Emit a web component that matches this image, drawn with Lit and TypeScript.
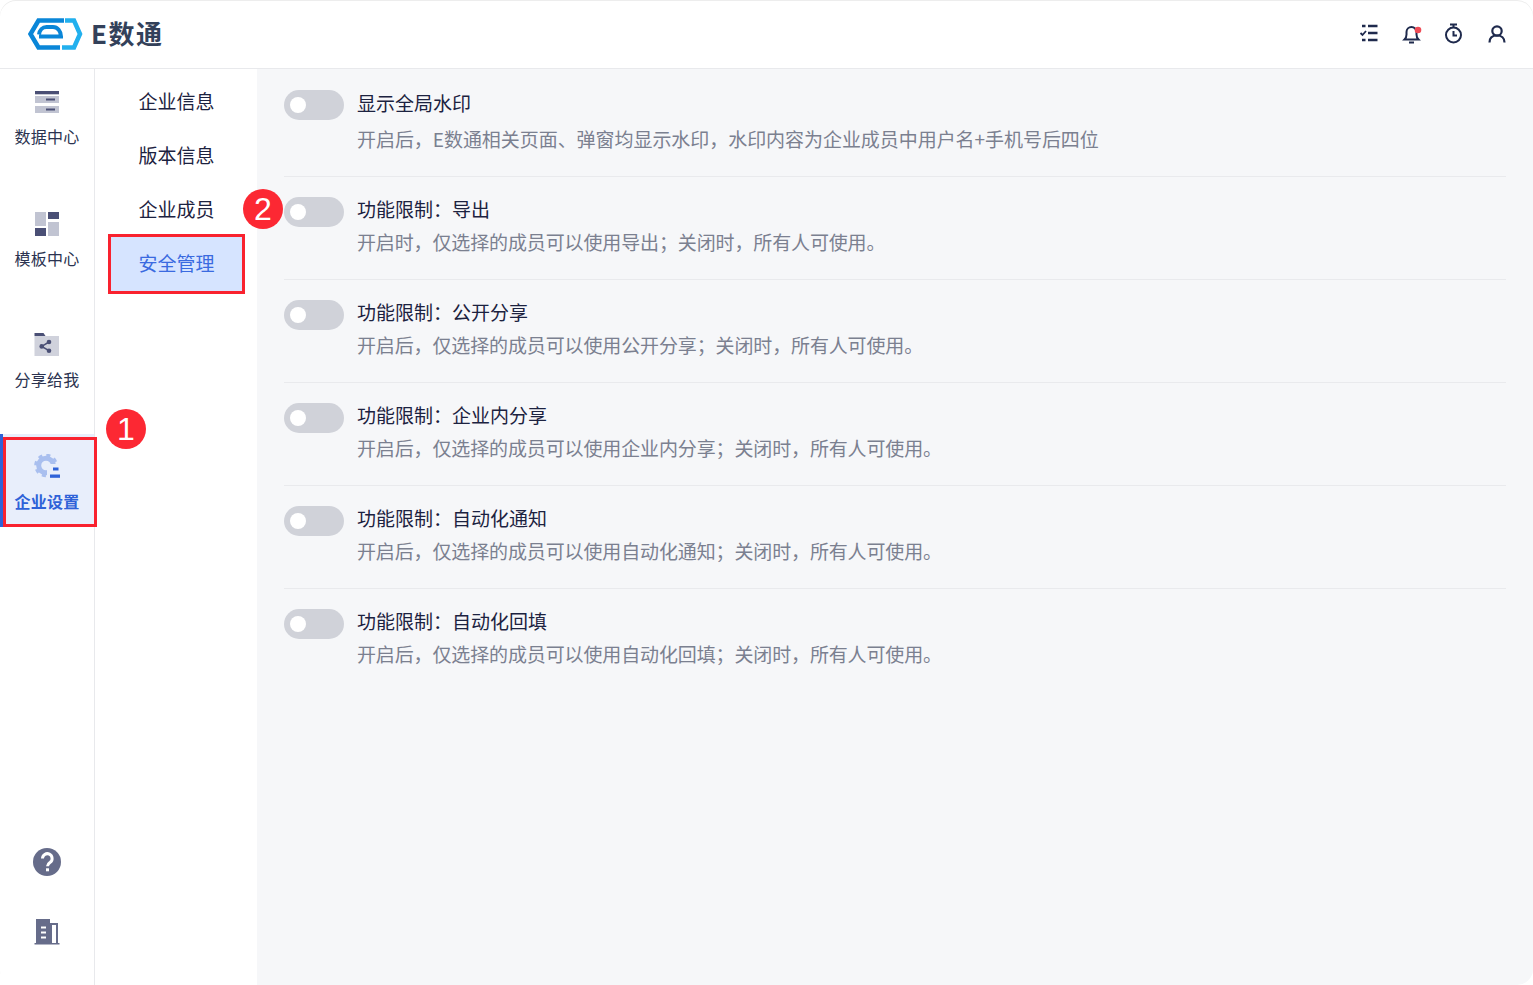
import { LitElement, html, css, svg } from "lit";
import { customElement } from "lit/decorators.js";

const rows = [
  ["显示全局水印", "开启后，E数通相关页面、弹窗均显示水印，水印内容为企业成员中用户名+手机号后四位"],
  ["功能限制：导出", "开启时，仅选择的成员可以使用导出；关闭时，所有人可使用。"],
  ["功能限制：公开分享", "开启后，仅选择的成员可以使用公开分享；关闭时，所有人可使用。"],
  ["功能限制：企业内分享", "开启后，仅选择的成员可以使用企业内分享；关闭时，所有人可使用。"],
  ["功能限制：自动化通知", "开启后，仅选择的成员可以使用自动化通知；关闭时，所有人可使用。"],
  ["功能限制：自动化回填", "开启后，仅选择的成员可以使用自动化回填；关闭时，所有人可使用。"],
];

const icons = {
  data: svg`<rect x="2" y="2" width="24" height="3.300" fill="#4a4f75"/><rect x="2" y="7" width="24" height="7" fill="#c1c4d2"/><rect x="13" y="9.500" width="9" height="2" fill="#4a4f75"/><rect x="2" y="17" width="24" height="7" fill="#c1c4d2"/><rect x="13" y="19.500" width="9" height="2" fill="#4a4f75"/>`,
  tpl: svg`<rect x="2" y="1" width="11" height="14" fill="#c1c4d2"/><rect x="15" y="1" width="11" height="7" fill="#4a4f75"/><rect x="2" y="17" width="11" height="8" fill="#4a4f75"/><rect x="15" y="11" width="11" height="14" fill="#c1c4d2"/>`,
  share: svg`<path d="M1.500 4V1h9l2 3z" fill="#4a4f75"/><rect x="1.500" y="4" width="24.500" height="20" fill="#d0d2dc"/><path d="M16 10l-7.300 4.400L16 18.700" fill="none" stroke="#4a4f75" stroke-width="1.500"/><circle cx="16" cy="10" r="2.300" fill="#4a4f75"/><circle cx="8.700" cy="14.400" r="2.300" fill="#4a4f75"/><circle cx="16" cy="18.700" r="2.300" fill="#4a4f75"/>`,
  gear: svg`<circle cx="13" cy="11.500" r="7.300" fill="none" stroke="#a9bfef" stroke-width="5"/><circle cx="13" cy="11.500" r="10.300" fill="none" stroke="#a9bfef" stroke-width="3" stroke-dasharray="4 4.090"/><rect x="14" y="10" width="14" height="16" fill="#e8eefb"/><rect x="20" y="13.500" width="5.500" height="3" fill="#2f62d8"/><rect x="17" y="20.500" width="10" height="3.300" fill="#2f62d8"/>`,
};

@customElement("app-root")
export class AppRoot extends LitElement {
  static styles = css`
    :host {
      display: block;
      width: 1533px;
      height: 985px;
      position: relative;
      overflow: hidden;
      background: #fff;
      font-family: "Noto Sans CJK SC", "Liberation Sans", sans-serif;
    }
    .frame {
      height: 985px;
      display: flex;
      flex-direction: column;
      border-radius: 16px;
      overflow: hidden;
      box-shadow: inset 0 1px 0 #ededed;
      background: #fff;
    }
    header {
      flex: none;
      height: 68px;
      border-bottom: 1px solid #e8e9ec;
      display: flex;
      align-items: center;
      justify-content: space-between;
      padding: 0 25px 0 28px;
    }
    .brand { display: flex; align-items: center; gap: 8px; }
    .brand svg { display: block; }
    .brand-name {
      font-size: 26px;
      font-weight: 700;
      color: #33415a;
      line-height: 30px;
      letter-spacing: 1.5px;
      padding-bottom: 3px;
    }
    .tools { display: flex; align-items: center; gap: 20.67px; }
    .tools svg { display: block; fill: none; stroke: #1f2a4d; stroke-width: 2; }
    .body { flex: 1; display: flex; min-height: 0; }
    .rail {
      flex: none;
      width: 94px;
      box-sizing: content-box;
      border-right: 1px solid #e8e9ec;
      display: flex;
      flex-direction: column;
      gap: 28.67px;
    }
    .rail-item {
      height: 93px;
      flex: none;
      display: flex;
      flex-direction: column;
      align-items: center;
      padding-top: 20px;
      box-sizing: border-box;
      color: #2b3350;
      font-size: 16px;
      letter-spacing: 0.2px;
      line-height: 24px;
    }
    .rail-item svg { display: block; margin-bottom: 9px; }
    .rail-item.on {
      background: #e8eefb;
      color: #2f62d8;
      font-weight: 700;
      box-shadow: inset 3px 0 0 #2f62d8;
    }
    .rail-foot {
      margin-top: auto;
      display: flex;
      flex-direction: column;
      align-items: center;
      gap: 43px;
      padding-bottom: 40px;
    }
    .rail-foot svg { display: block; }
    .sub {
      flex: none;
      width: 162px;
      box-sizing: border-box;
      padding: 6px 15px 0 16px;
    }
    .sub-item {
      height: 54px;
      line-height: 52px;
      font-size: 19px;
      color: #1c2240;
      text-align: center;
    }
    .sub-item.on { background: #d6e4ff; color: #3a6ae0; }
    .main {
      flex: 1;
      background: #f6f7f9;
      padding: 0 27px;
      min-width: 0;
    }
    .row {
      display: flex;
      align-items: flex-start;
      gap: 13px;
      height: 103px;
      padding-top: 18px;
      box-sizing: border-box;
      border-bottom: 1px solid #e9eaed;
    }
    .row:first-child { height: 108px; padding-top: 20px; }
    .row:last-child { border-bottom: none; }
    .toggle {
      flex: none;
      width: 60px;
      height: 30px;
      margin-top: 2px;
      border-radius: 15px;
      background: #d0d2d9;
      display: flex;
      align-items: center;
      padding-left: 6px;
      box-sizing: border-box;
    }
    .row:first-child .toggle { margin-top: 1px; }
    .knob { width: 16px; height: 16px; border-radius: 50%; background: #fff; }
    .title { font-size: 19px; line-height: 28px; color: #1c2240; }
    .desc {
      font-size: 19px;
      line-height: 28px;
      color: #7b8090;
      margin-top: 5px;
      letter-spacing: -0.13px;
    }
    .row:first-child .desc { margin-top: 8px; letter-spacing: -0.05px; }
    .mark {
      position: absolute;
      box-sizing: border-box;
      border: 3px solid #f9222f;
    }
    .mark.a { left: 3px; top: 437px; width: 94px; height: 90px; }
    .mark.b { left: 108px; top: 234px; width: 137px; height: 60px; }
    .badge {
      position: absolute;
      width: 40px;
      height: 40px;
      border-radius: 50%;
      background: #fc2833;
      color: #fff;
      font: 32px/40px "Liberation Sans", sans-serif;
      text-align: center;
    }
    .badge.one { left: 106px; top: 409px; }
    .badge.two { left: 243px; top: 189px; }
  `;

  render() {
    return html`
      <div class="frame">
        <header>
          <div class="brand">
            <svg width="55" height="32" viewBox="0 0 55 32" fill="none" stroke-width="4.500">
              <path d="M36 2.500H10.500L2.500 16l8 13.500H32" stroke="#0a86d8"/>
              <path d="M11 18.500H33c0-5.500-3.500-9.500-8-9.500h-6.500c-4 0-7 3-7.500 7.500" stroke="#0a86d8" stroke-width="4"/>
              <path d="M37 2.500h9L52 16l-6 13.500H34" stroke="#22b0ee"/>
            </svg>
            <span class="brand-name">E数通</span>
          </div>
          <div class="tools">
            <svg width="22" height="22" viewBox="0 0 22 22">
              <path d="M10 3h9.500M10 10h9.500M10 17h9.500M4 3h3.500M4 17h3.500" stroke-width="2.600"/>
              <path d="M2.500 10l2 2 3.500-4" stroke-width="1.800"/>
            </svg>
            <svg width="22" height="22" viewBox="0 0 22 22">
              <path d="M3.500 16.500c1.500-1.500 2-3 2-5V9a5 5 0 0 1 10 0v2.500c0 2 .5 3.500 2 5zM8 19.500h5"/>
              <circle cx="17" cy="7" r="3.300" fill="#ef4b55" stroke="none"/>
            </svg>
            <svg width="22" height="22" viewBox="0 0 22 22">
              <circle cx="10.500" cy="12" r="7.500"/>
              <path d="M7 1.500h7M10.500 1.500v3M10.500 8v4.500H14"/>
            </svg>
            <svg width="22" height="22" viewBox="0 0 22 22">
              <circle cx="11" cy="8" r="4.700" stroke-width="2.200"/>
              <path d="M3.500 19.500c0-4.500 3-7 7.500-7s7.500 2.500 7.500 7" stroke-width="2.200"/>
            </svg>
          </div>
        </header>
        <div class="body">
          <nav class="rail">
            ${this.railItem("数据中心", icons.data)}
            ${this.railItem("模板中心", icons.tpl)}
            ${this.railItem("分享给我", icons.share)}
            ${this.railItem("企业设置", icons.gear, true)}
            <div class="rail-foot">
              <svg width="28" height="28" viewBox="0 0 28 28">
                <circle cx="14" cy="14" r="14" fill="#666c8a"/>
                <path d="M9.500 10.500a4.800 4.800 0 1 1 7.700 3.800c-1.700 1.200-2.700 2-2.700 4" fill="none" stroke="#fff" stroke-width="3"/>
                <rect x="13" y="20.300" width="3" height="3" fill="#fff"/>
              </svg>
              <svg width="26" height="26" viewBox="0 0 26 26">
                <path d="M2 0h14v4h8v20h1.500v1.500H.5V24H2zM7 7.500v2h5v-2zm0 5v2h5v-2zm0 5v2h5v-2zM18 6v18h4V6z" fill="#666c8a" fill-rule="evenodd"/>
              </svg>
            </div>
          </nav>
          <nav class="sub">
            <div class="sub-item">企业信息</div>
            <div class="sub-item">版本信息</div>
            <div class="sub-item">企业成员</div>
            <div class="sub-item on">安全管理</div>
          </nav>
          <main class="main">
            ${rows.map(
              ([t, d]) => html`
                <div class="row">
                  <div class="toggle"><div class="knob"></div></div>
                  <div>
                    <div class="title">${t}</div>
                    <div class="desc">${d}</div>
                  </div>
                </div>
              `
            )}
          </main>
        </div>
      </div>
      <div class="mark a"></div>
      <div class="mark b"></div>
      <div class="badge one">1</div>
      <div class="badge two">2</div>
    `;
  }

  railItem(label: string, icon: unknown, on = false) {
    return html`
      <div class="rail-item ${on ? "on" : ""}">
        <svg width="28" height="26" viewBox="0 0 28 26">${icon}</svg>
        <span>${label}</span>
      </div>
    `;
  }
}
